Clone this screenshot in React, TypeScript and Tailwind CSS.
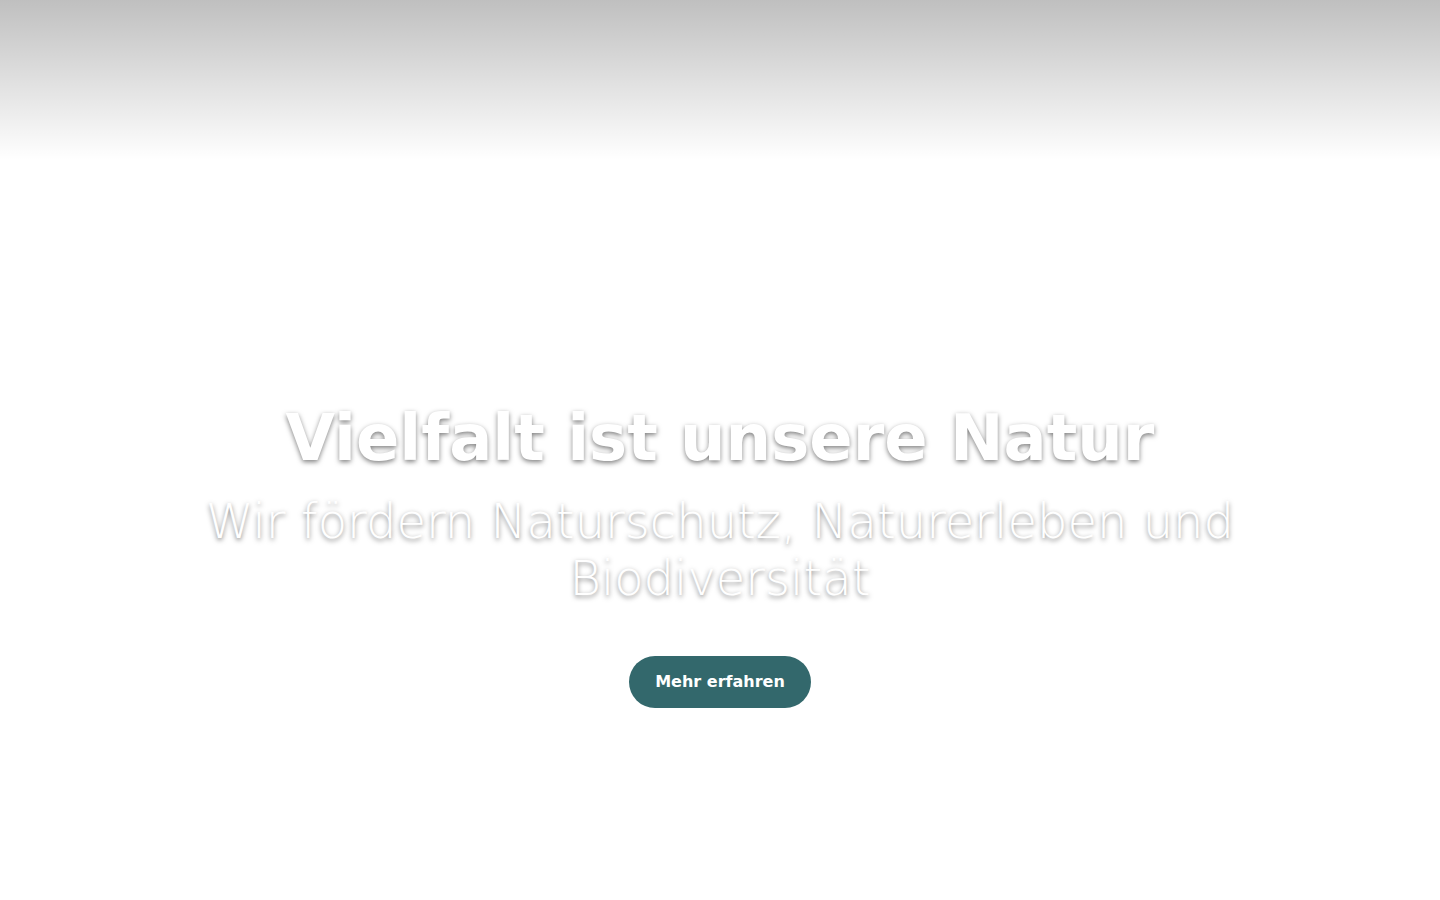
export default function App() {
  return (
    <div className="flex min-h-screen flex-col bg-white font-['DejaVu_Sans',sans-serif]">
      <header className="h-40 bg-linear-to-b from-black/25 to-transparent" />
      <main className="flex flex-col items-center px-48 pt-60 text-center text-white">
        <h1 className="text-[64px] leading-[1.2] font-bold [text-shadow:0_2px_5px_rgba(0,0,0,0.5)]">
          Vielfalt ist unsere Natur
        </h1>
        <p className="mt-4 text-[48px] leading-[1.2] font-extralight [text-shadow:0_2px_5px_rgba(0,0,0,0.5)]">
          Wir fördern Naturschutz, Naturerleben und Biodiversität
        </p>
        <a href="#mehr" className="mt-12 flex h-13 items-center rounded-full bg-[#33686c] px-[26px] text-base font-bold">
          Mehr erfahren
        </a>
      </main>
    </div>
  );
}
